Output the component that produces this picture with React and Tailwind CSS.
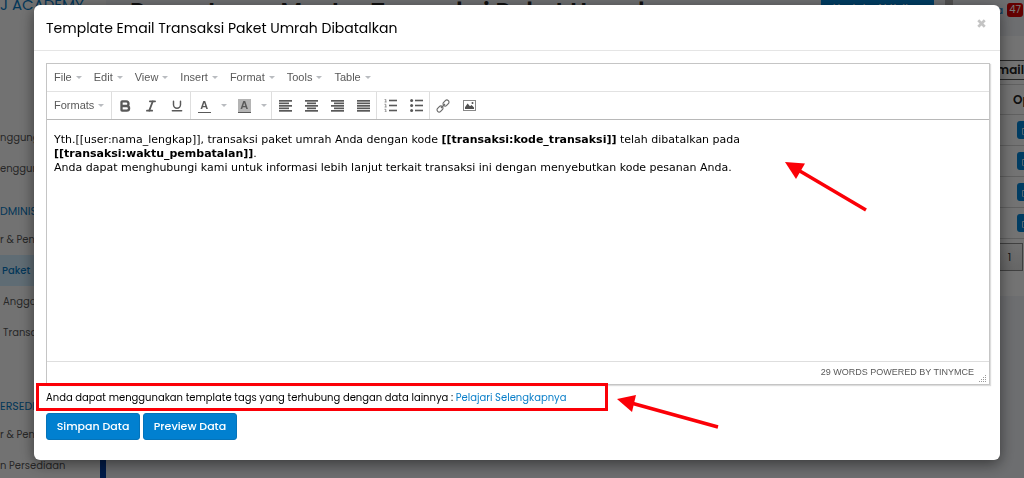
import { useState } from "react";
import { Bold, Italic, Underline, X } from "lucide-react";
import { FaRegEdit } from "react-icons/fa";

const menus = ["File", "Edit", "View", "Insert", "Format", "Tools", "Table"];

const sidebarItems = [
  { text: "nggung", top: "mt-[109px]" },
  { text: "engguna" },
  { text: "DMINIST", heading: true, top: "mt-[15px]" },
  { text: "r & Penda" },
  { text: "Paket", active: true },
  { text: "Anggo", indent: true },
  { text: "Transa", indent: true },
  { text: "ERSEDIA", heading: true, top: "mt-[46px]" },
  { text: "r & Pend" },
  { text: "n Persediaan" },
];

function Caret() {
  return (
    <span className="border-x-[3px] border-t-[3px] border-x-transparent border-t-[#b9bcc0]" />
  );
}

// Ikon perataan: setiap baris [x, lebar]
const alignments = [
  { label: "Rata kiri", rows: [[0, 13], [0, 10], [0, 13], [0, 10], [0, 13]] },
  { label: "Rata tengah", rows: [[0, 13], [2, 9], [0, 13], [2, 9], [0, 13]] },
  { label: "Rata kanan", rows: [[0, 13], [3, 10], [0, 13], [3, 10], [0, 13]] },
  { label: "Rata penuh", rows: [[0, 13], [0, 13], [0, 13], [0, 13], [0, 13]] },
];

function AlignIcon({ rows }) {
  return (
    <svg width="13" height="12" viewBox="0 0 13 12" fill="#595959">
      {rows.map(([x, w], i) => (
        <rect key={i} x={x} y={i * 2.5} width={w} height="1.7" />
      ))}
    </svg>
  );
}

function ListIcon({ numbered }) {
  return (
    <svg width="13" height="13" viewBox="0 0 13 13" fill="#595959">
      {[1, 6, 11].map((y) => (
        <g key={y}>
          <rect x="5" y={y - 0.3} width="8" height="1.6" />
          {numbered ? (
            <path
              d={`M0.5 ${y - 0.7}h1.3v2.6M0.6 ${y + 2}h2`}
              fill="none"
              stroke="#777"
              strokeWidth="0.8"
            />
          ) : (
            <circle cx="1.6" cy={y + 0.5} r="1.5" />
          )}
        </g>
      ))}
    </svg>
  );
}

function LinkIcon() {
  return (
    <svg width="14" height="14" viewBox="0 0 14 14" fill="none" stroke="#6b6b6b" strokeWidth="1.2">
      <rect x="-3.3" y="-2.1" width="6.6" height="4.2" rx="2.1" transform="translate(4 10) rotate(-45)" />
      <rect x="-3.3" y="-2.1" width="6.6" height="4.2" rx="2.1" transform="translate(10 4) rotate(-45)" />
      <path d="M5 9 9 5" />
    </svg>
  );
}

function ImageIcon() {
  return (
    <svg width="13" height="11" viewBox="0 0 13 11">
      <rect x="0.5" y="0.5" width="12" height="10" fill="white" stroke="#888" />
      <path d="M2 9V7.2L4.6 3.5 7 6.3 8.6 5 11 7.5V9Z" fill="#505050" />
      <circle cx="9.5" cy="3" r="1" fill="#505050" />
    </svg>
  );
}

function ToolButton({ label, narrow, children }) {
  return (
    <button
      type="button"
      aria-label={label}
      className={`flex h-full items-center justify-center text-[#595959] ${
        narrow ? "w-3.5" : "w-[26px]"
      }`}
    >
      {children}
    </button>
  );
}

function ToolGroup({ children }) {
  return <div className="flex border-r border-[#dedede] last:border-r-0">{children}</div>;
}

function Editor() {
  return (
    <div className="border border-[#c5c5c5] bg-white font-['Liberation_Sans',Arial,sans-serif] text-[11px] text-[#595959] shadow-[1px_1px_1px_#ddd]">
      <div className="flex h-7 items-center border-b border-[#e2e2e2] pl-px">
        {menus.map((menu) => (
          <button key={menu} type="button" className="flex items-center gap-1 px-1.5">
            {menu}
            <Caret />
          </button>
        ))}
      </div>
      <div className="flex h-7 border-b border-[#b8b8b8]">
        <ToolGroup>
          <button type="button" className="flex items-center gap-1 px-[7px]">
            Formats
            <Caret />
          </button>
        </ToolGroup>
        <ToolGroup>
          <ToolButton label="Tebal">
            <Bold size={14} strokeWidth={4} />
          </ToolButton>
          <ToolButton label="Miring">
            <Italic size={14} strokeWidth={3} />
          </ToolButton>
          <ToolButton label="Garis bawah">
            <Underline size={14} strokeWidth={2.5} />
          </ToolButton>
        </ToolGroup>
        <ToolGroup>
          <ToolButton label="Warna teks">
            <span className="w-[13px] border-b border-[#595959] text-center font-bold leading-[13px]">
              A
            </span>
          </ToolButton>
          <ToolButton label="Pilih warna teks" narrow>
            <Caret />
          </ToolButton>
          <ToolButton label="Warna latar">
            <span className="w-[13px] border-b border-[#595959] bg-[#b4b4b4] text-center font-bold leading-[13px]">
              A
            </span>
          </ToolButton>
          <ToolButton label="Pilih warna latar" narrow>
            <Caret />
          </ToolButton>
        </ToolGroup>
        <ToolGroup>
          {alignments.map((a) => (
            <ToolButton key={a.label} label={a.label}>
              <AlignIcon rows={a.rows} />
            </ToolButton>
          ))}
        </ToolGroup>
        <ToolGroup>
          <ToolButton label="Daftar bernomor">
            <ListIcon numbered />
          </ToolButton>
          <ToolButton label="Daftar poin">
            <ListIcon />
          </ToolButton>
        </ToolGroup>
        <ToolGroup>
          <ToolButton label="Tautan">
            <LinkIcon />
          </ToolButton>
          <ToolButton label="Gambar">
            <ImageIcon />
          </ToolButton>
        </ToolGroup>
      </div>
      <div
        role="textbox"
        aria-label="Isi email"
        contentEditable
        suppressContentEditableWarning
        className="min-h-[241px] px-[7px] pt-[13px] font-[Verdana,'DejaVu_Sans',sans-serif] text-[11px] leading-[14px] text-black"
      >
        <p>
          Yth.[[user:nama_lengkap]], transaksi paket umrah Anda dengan kode{" "}
          <strong>[[transaksi:kode_transaksi]]</strong> telah dibatalkan pada
          <br />
          <strong>[[transaksi:waktu_pembatalan]]</strong>.
          <br />
          Anda dapat menghubungi kami untuk informasi lebih lanjut terkait transaksi ini dengan
          menyebutkan kode pesanan Anda.
        </p>
      </div>
      <div className="flex h-[23px] items-center justify-end gap-1 border-t border-[#dedede] pr-0.5 text-[9px]">
        29 WORDS POWERED BY TINYMCE
        <svg width="9" height="9" viewBox="0 0 9 9" fill="#999" className="self-end">
          <path d="M7 0h1v1h-1zM5 2h1v1h-1zM7 2h1v1h-1zM3 4h1v1h-1zM5 4h1v1h-1zM7 4h1v1h-1zM1 6h1v1h-1zM3 6h1v1h-1zM5 6h1v1h-1zM7 6h1v1h-1z" />
        </svg>
      </div>
    </div>
  );
}

function Arrows() {
  return (
    <svg
      className="pointer-events-none absolute left-0 top-0 h-full w-full"
      fill="#fb0007"
      stroke="#fb0007"
      strokeWidth="3.5"
    >
      <path stroke="none" d="M751 157 771 158.5 762 174Z" />
      <path d="M765 165.500 832 205" />
      <path stroke="none" d="M583 394 602 390 598 407Z" />
      <path d="M599 398.500 684 422" />
    </svg>
  );
}

function TemplateModal({ onClose }) {
  return (
    <div className="fixed inset-0 bg-black/53 pb-[18px] pl-[34px] pr-6 pt-[5px]">
      <div
        role="dialog"
        aria-labelledby="judul-modal"
        className="relative rounded-md bg-white shadow-[0_4px_15px_rgba(0,0,0,0.5)]"
      >
        <div className="flex h-[46px] items-center justify-between border-b border-[#e5e5e5] px-3">
          <h2 id="judul-modal" className="pt-0.5 text-[14px] text-black">
            Template Email Transaksi Paket Umrah Dibatalkan
          </h2>
          <button type="button" aria-label="Tutup" onClick={onClose} className="mb-2 text-[#c4c4c4]">
            <X size={13} strokeWidth={5} strokeLinecap="butt" />
          </button>
        </div>
        <div className="pb-5 pl-3 pr-2.5 pt-3">
          <Editor />
          <div className="relative mb-2 mt-1 flex h-4 items-center text-[10px] text-black">
            <p>
              Anda dapat menggunakan template tags yang terhubung dengan data lainnya :{" "}
              <a href="#tags" className="text-[#0a7fc9]">
                Pelajari Selengkapnya
              </a>
            </p>
            <span className="absolute -left-2.5 -top-1.5 h-7 w-[572px] border-[3px] border-[#fb0007]" />
          </div>
          <div className="flex gap-[3px] text-[11px] font-medium text-white">
            <button
              type="button"
              className="h-[27px] w-[94px] rounded-[3px] border border-[#0573b9] bg-[#0180d0]"
            >
              Simpan Data
            </button>
            <button
              type="button"
              className="h-[27px] w-[94px] rounded-[3px] border border-[#0573b9] bg-[#0180d0]"
            >
              Preview Data
            </button>
          </div>
        </div>
        <Arrows />
      </div>
    </div>
  );
}

function Sidebar() {
  return (
    <nav className="flex w-[106px] shrink-0 overflow-hidden bg-[#f3f3f3] text-[10px] text-[#555]">
      <div className="w-[100px] shrink-0 whitespace-nowrap">
        <div className="-mt-1 h-[17px] text-[15px] leading-[17px] text-[#0876bd]">J ACADEMY</div>
        {sidebarItems.map((item, i) => (
          <a
            key={i}
            href="#menu"
            className={[
              "flex items-center",
              item.top || "",
              item.heading ? "h-[25px] text-[11px] text-[#0876bd]" : "h-[31px]",
              item.active ? "bg-[#cbe6f7] pl-0.5 font-medium text-[#0876bd]" : "",
              item.indent ? "pl-[3px]" : "",
            ].join(" ")}
          >
            {item.text}
          </a>
        ))}
      </div>
      <div className="mt-auto h-10 w-1.5 bg-[#003a9c]" />
    </nav>
  );
}

function Page() {
  return (
    <main className="min-w-0 flex-1 overflow-hidden bg-[#e8eaee]">
      <div className="flex h-9 items-start pl-6">
        <h1 className="whitespace-nowrap text-[24px] font-semibold leading-6 text-[#222]">
          Pengaturan Master Transaksi Paket Umrah
        </h1>
        <button
          type="button"
          className="ml-auto mr-[11px] h-4 w-[113px] shrink-0 bg-[#0180d0] text-[11px] leading-3 text-white"
        >
          Update Aktivitas
        </button>
        <div className="h-9 w-2 shrink-0 bg-[#aaa]" />
        <div className="flex w-[71px] shrink-0 items-center justify-end gap-1 pr-px pt-0.5 text-[11px] text-[#0876bd]">
          Anggota
          <span className="rounded-[3px] bg-[#d40000] px-0.5 text-[10px] leading-[14px] text-white">
            47
          </span>
        </div>
      </div>
      <section className="h-[260px] bg-[#f5f5f5] pt-6">
        <div className="flex h-5 items-center justify-end border-y border-[#555] text-[12px] font-semibold text-[#222]">
          Email
        </div>
        <table className="mt-1 w-full table-fixed border-collapse text-[12px]">
          <thead>
            <tr className="h-[30px] border-y border-[#ccc]">
              <th />
              <th className="w-[11px] whitespace-nowrap p-0 text-left font-semibold text-[#222]">
                Opsi
              </th>
            </tr>
          </thead>
          <tbody>
            {[1, 2, 3, 4].map((n) => (
              <tr key={n} className="h-[31px] border-b border-[#ccc]">
                <td />
                <td className="p-0 pl-1">
                  <button
                    type="button"
                    aria-label="Ubah"
                    className="flex h-[18px] w-6 items-end rounded-[3px] bg-[#0180d0] p-1 pl-[5px] text-white"
                  >
                    <FaRegEdit size={8} className="shrink-0" />
                  </button>
                </td>
              </tr>
            ))}
          </tbody>
        </table>
        <div className="flex justify-end pr-px pt-1">
          <button
            type="button"
            className="h-7 w-[27px] border border-[#888] bg-linear-to-b from-[#eee] to-[#d8d8d8] text-[11px] text-[#333]"
          >
            1
          </button>
        </div>
      </section>
    </main>
  );
}

export default function App() {
  const [open, setOpen] = useState(true);

  return (
    <div className="flex h-screen overflow-hidden font-['Poppins',Inter,sans-serif]">
      <Sidebar />
      <Page />
      {open && <TemplateModal onClose={() => setOpen(false)} />}
    </div>
  );
}
